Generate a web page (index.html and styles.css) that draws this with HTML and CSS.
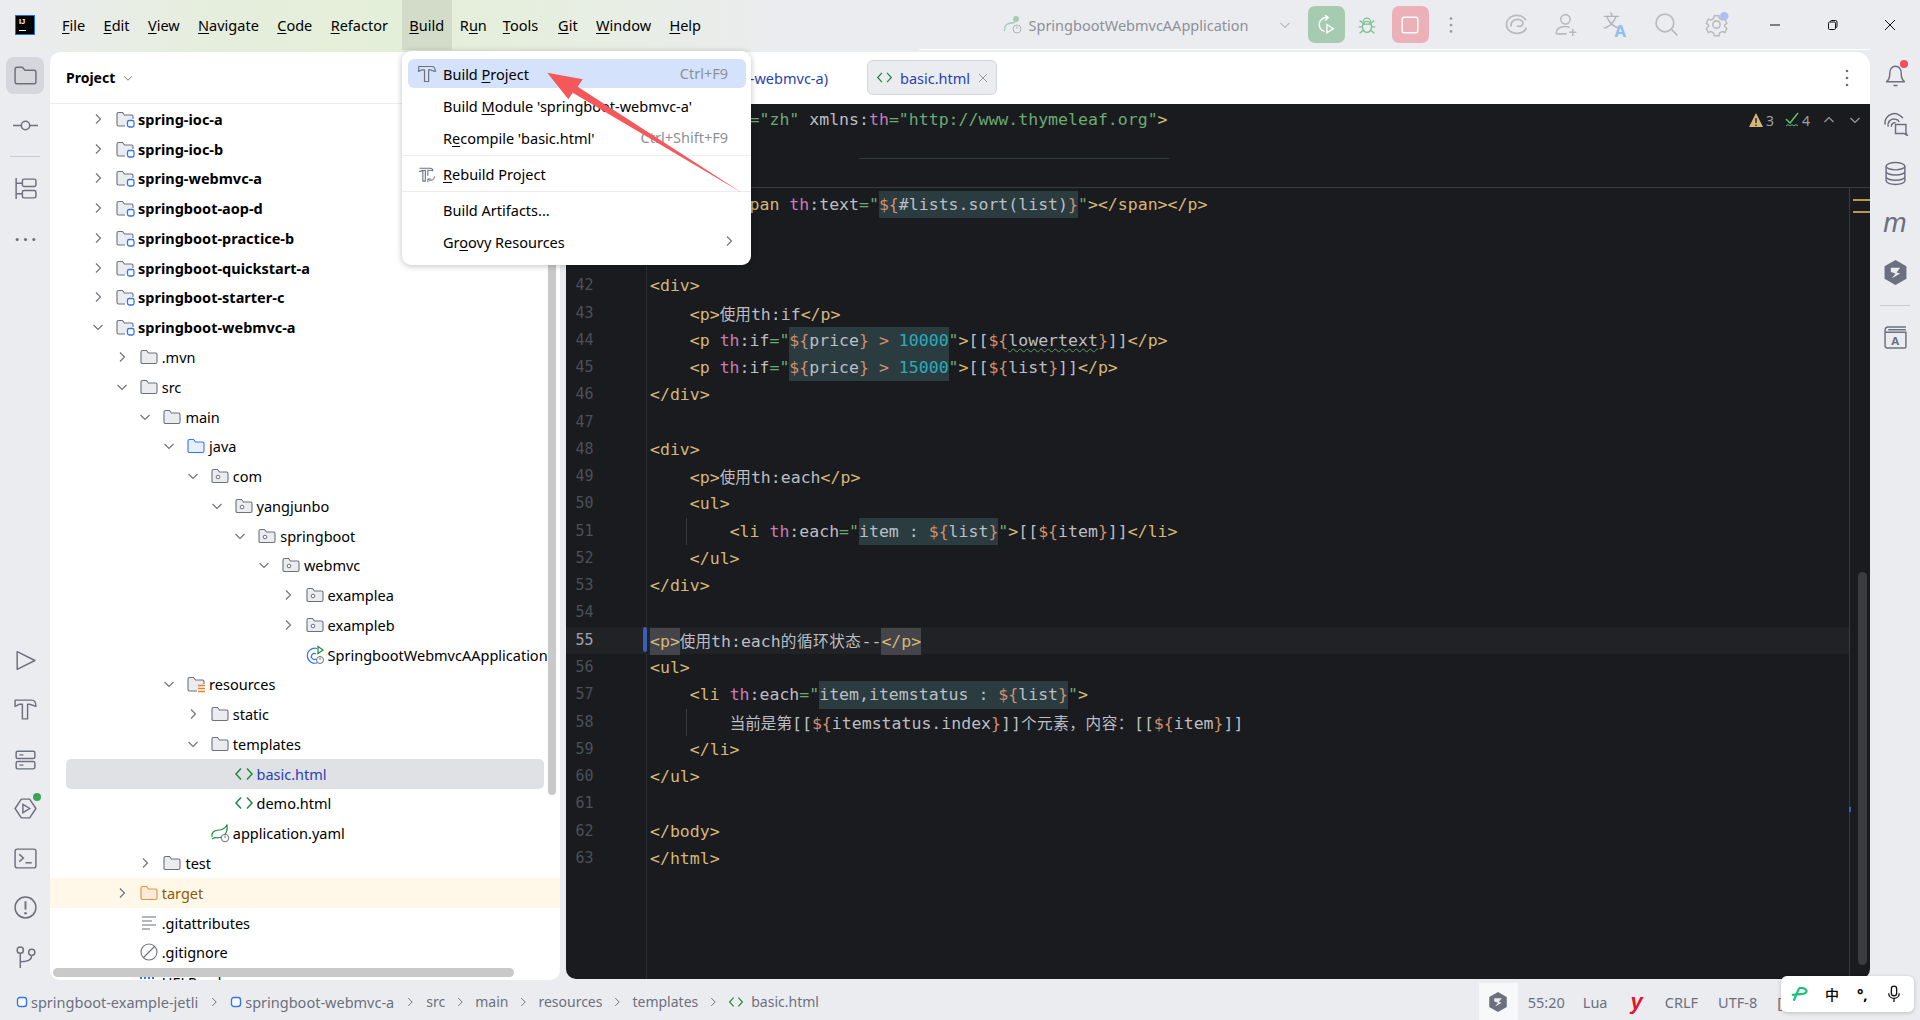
FILE: index.html
```html
<!DOCTYPE html>
<html lang="en">
<head>
<meta charset="utf-8">
<title>springboot-webmvc-a – basic.html</title>
<link rel="stylesheet" href="styles.css">
</head>
<body>
<svg class="defs" width="0" height="0" aria-hidden="true">
<defs>
<symbol id="r" viewBox="0 0 16 16"><path d="M6 3.500 10.500 8 6 12.500" fill="none" stroke="#6c707e" stroke-width="1.100"/></symbol>
<symbol id="d" viewBox="0 0 16 16"><path d="M3.500 6 8 10.500 12.500 6" fill="none" stroke="#6c707e" stroke-width="1.100"/></symbol>
<symbol id="folder" viewBox="0 0 20 20"><path d="M2 5a1.500 1.500 0 0 1 1.500-1.500h4l2 2.500h7a1.500 1.500 0 0 1 1.500 1.500v7.500a1.500 1.500 0 0 1-1.500 1.500h-13A1.500 1.500 0 0 1 2 15.500z" fill="#ebecf0" stroke="#6c707e" stroke-width="1.100"/></symbol>
<symbol id="pkg" viewBox="0 0 20 20"><path d="M2 5a1.500 1.500 0 0 1 1.500-1.500h4l2 2.500h7a1.500 1.500 0 0 1 1.500 1.500v7.500a1.500 1.500 0 0 1-1.500 1.500h-13A1.500 1.500 0 0 1 2 15.500z" fill="#ebecf0" stroke="#6c707e" stroke-width="1.100"/><circle cx="8" cy="11" r="1.800" fill="#fff" stroke="#6c707e"/></symbol>
<symbol id="mod" viewBox="0 0 20 20"><path d="M10 17H3.500A1.500 1.500 0 0 1 2 15.500V5a1.500 1.500 0 0 1 1.500-1.500h4l2 2.500h7a1.500 1.500 0 0 1 1.500 1.500V10" fill="#ebecf0" stroke="#6c707e" stroke-width="1.100"/><rect x="12.500" y="11.500" width="6.500" height="6.500" rx="1.800" fill="#fff" stroke="#3574f0" stroke-width="1.300"/></symbol>
<symbol id="java" viewBox="0 0 20 20"><path d="M2 5a1.500 1.500 0 0 1 1.500-1.500h4l2 2.500h7a1.500 1.500 0 0 1 1.500 1.500v7.500a1.500 1.500 0 0 1-1.500 1.500h-13A1.500 1.500 0 0 1 2 15.500z" fill="#e7effd" stroke="#3574f0" stroke-width="1.100"/></symbol>
<symbol id="res" viewBox="0 0 20 20"><path d="M11 17H3.500A1.500 1.500 0 0 1 2 15.500V5a1.500 1.500 0 0 1 1.500-1.500h4l2 2.500h7a1.500 1.500 0 0 1 1.500 1.500V10" fill="#ebecf0" stroke="#6c707e" stroke-width="1.100"/><path d="M12 11.500h7M12 14.500h7M12 17.500h7" stroke="#e8812c" stroke-width="1.500"/></symbol>
<symbol id="target" viewBox="0 0 20 20"><path d="M2 5a1.500 1.500 0 0 1 1.500-1.500h4l2 2.500h7a1.500 1.500 0 0 1 1.500 1.500v7.500a1.500 1.500 0 0 1-1.500 1.500h-13A1.500 1.500 0 0 1 2 15.500z" fill="#fdeadb" stroke="#e8963c" stroke-width="1.200"/></symbol>
<symbol id="html" viewBox="0 0 20 20"><path d="M7 4.500 2 10l5 5.500M13 4.500l5 5.500-5 5.500" fill="none" stroke="#208a3c" stroke-width="1.500"/></symbol>
<symbol id="boot" viewBox="0 0 20 20"><path d="M12 3.500a7.500 7.500 0 1 0 1 14" fill="none" stroke="#3574f0" stroke-width="1.200"/><path d="M11 9a3 3 0 1 0 0 5" fill="none" stroke="#3574f0" stroke-width="1.200"/><path d="M13 1.500 18 5l-5 3.500z" fill="#fff" stroke="#208a3c" stroke-width="1.200"/><circle cx="15" cy="15" r="3.500" fill="#fff" stroke="#6c707e"/><path d="M15 12.500v2.500" stroke="#6c707e"/></symbol>
<symbol id="yaml" viewBox="0 0 20 20"><path d="M2 14c-1-4 2-7 7-7 4 0 6-2 8-5 1 5-1 10-5 12-3 1-5 1-7 .5L2 16" fill="none" stroke="#208a3c" stroke-width="1.200"/><circle cx="15" cy="15" r="3.800" fill="#fff" stroke="#6c707e"/><path d="M15 12.500V15" stroke="#6c707e"/></symbol>
<symbol id="attr" viewBox="0 0 20 20"><path d="M3 4h14M3 8h10M3 12h14M3 16h8" stroke="#6c707e" stroke-width="1.100"/></symbol>
<symbol id="ignore" viewBox="0 0 20 20"><circle cx="10" cy="10" r="8" fill="none" stroke="#6c707e" stroke-width="1.100"/><path d="M4.500 15.500 15.500 4.500" stroke="#6c707e" stroke-width="1.100"/></symbol>
<symbol id="md" viewBox="0 0 20 20"><path d="M2 3v4M6 3v4M10 3v4M14 3v4" stroke="#3574f0" stroke-width="2"/></symbol>
<symbol id="hex" viewBox="0 0 24 24"><path d="M12 0 22.500 6v12L12 24 1.500 18V6z" fill="#6c707e"/><path d="M7.500 7.500h9l-3.500 4.500 3.500 1-8 4.500 3.500-4.500-4.500-1.500z" fill="#ebecf0"/></symbol>
<symbol id="hammer" viewBox="0 0 24 24"><path d="M2 3h16c3 0 4 3 4 6l-6-2h-2v14H9V7H6L2 9z" fill="none" stroke="#6c707e" stroke-width="1.400" stroke-linejoin="round"/></symbol>
</defs>
</svg>

<div class="app">
  <header class="titlebar">
    <div class="logo"><span>IJ</span><i></i></div>
    <nav class="menubar">
      <span class="mi"><u>F</u>ile</span><span class="mi"><u>E</u>dit</span><span class="mi"><u>V</u>iew</span><span class="mi"><u>N</u>avigate</span><span class="mi"><u>C</u>ode</span><span class="mi"><u>R</u>efactor</span><span class="mi mi-open"><u>B</u>uild</span><span class="mi mi-tight">R<u>u</u>n</span><span class="mi mi-wide"><u>T</u>ools</span><span class="mi"><u>G</u>it</span><span class="mi"><u>W</u>indow</span><span class="mi"><u>H</u>elp</span>
    </nav>
    <div class="runcfg">
      <svg class="ic20" viewBox="0 0 20 20"><circle cx="13" cy="4" r="3" fill="#a6cbb0"/><path d="M2 14c-1-3 2-6 7-6 2 0 3-1 4-2M2 14l-1 2" fill="none" stroke="#a6cbb0" stroke-width="1.300"/><circle cx="14" cy="14" r="4" fill="none" stroke="#b0b2b8"/><path d="M14 11.500V14" stroke="#b0b2b8"/></svg>
      <span class="runname">SpringbootWebmvcAApplication</span>
      <svg class="cfgchev" viewBox="0 0 16 16"><path d="M3.500 6 8 10.500 12.500 6" fill="none" stroke="#b8bac0" stroke-width="1.100"/></svg>
    </div>
    <div class="runbtns">
      <span class="tb tb-green"><svg viewBox="0 0 24 24"><path d="M14 4a7.500 7.500 0 1 0 -3.500 15" fill="none" stroke="#fff" stroke-width="1.500"/><path d="M11 1.500 14.500 4 11 7" fill="none" stroke="#fff" stroke-width="1.500"/><path d="M13 11.500 20 16l-7 4.500z" fill="none" stroke="#fff" stroke-width="1.500"/></svg></span>
      <span class="tb tb-bug"><svg viewBox="0 0 24 24"><ellipse cx="12" cy="14" rx="5" ry="6" fill="none" stroke="#7fbf8e" stroke-width="1.500"/><path d="M8 8.500a4 4 0 0 1 8 0M4 7l3.500 3M20 7l-3.500 3M3 14h4M21 14h-4M4 21l3.500-3M20 21l-3.500-3M7.500 11h9" fill="none" stroke="#7fbf8e" stroke-width="1.500"/></svg></span>
      <span class="tb tb-red"><svg viewBox="0 0 24 24"><rect x="3.500" y="3.500" width="17" height="17" rx="2" fill="none" stroke="#fff" stroke-width="1.500"/></svg></span>
      <span class="tb tb-dots"><svg viewBox="0 0 24 24"><circle cx="12" cy="5" r="1.500" fill="#9a9ca3"/><circle cx="12" cy="12" r="1.500" fill="#9a9ca3"/><circle cx="12" cy="19" r="1.500" fill="#9a9ca3"/></svg></span>
    </div>
    <div class="tools">
      <span class="tb"><svg viewBox="0 0 24 24"><path d="M21 8C19 4 14 2.500 9.500 3.500 4.500 5 2 9 2.500 13c.7 5 5.500 8 11 7.500 4-.4 7-2.500 8-5.500M7 14c-1-3.500 1.500-7 6-7 3.500 0 5.500 2 5 4.500-.5 2.500-4 3-5.500 1.500" fill="none" stroke="#b8bac0" stroke-width="1.700"/></svg></span>
      <span class="tb"><svg viewBox="0 0 24 24"><circle cx="11" cy="7" r="4.500" fill="none" stroke="#b8bac0" stroke-width="1.500"/><path d="M2 21c0-4 3-7 9-7 1.500 0 3 .3 4 1M2 21h10M18 16v7M14.500 19.500h7" fill="none" stroke="#b8bac0" stroke-width="1.500"/></svg></span>
      <span class="tb"><svg viewBox="0 0 24 24"><text x="-1" y="14" class="tr-zh">文</text><text x="10" y="24" class="tr-a">A</text></svg></span>
      <span class="tb"><svg viewBox="0 0 24 24"><circle cx="10.500" cy="10.500" r="8.500" fill="none" stroke="#b8bac0" stroke-width="1.600"/><path d="m16.500 16.500 6 6" stroke="#b8bac0" stroke-width="1.600"/></svg></span>
      <span class="tb"><svg viewBox="0 0 24 24"><path d="M9.500 2.500h5l.7 3 2.700 1.500 3-.9 2 4.400-2.300 2 0 1.500 2.300 2-2 4.400-3-.9-2.700 1.500-.7 3h-5l-.7-3-2.700-1.500-3 .9-2-4.400 2.300-2v-1.500l-2.300-2 2-4.400 3 .9 2.700-1.500z" transform="translate(1.300 1.300) scale(.9)" fill="none" stroke="#b8bac0" stroke-width="1.600"/><circle cx="12" cy="12" r="3.500" fill="none" stroke="#b8bac0" stroke-width="1.500"/><circle cx="19.500" cy="4" r="4" fill="#a9c0f0"/></svg></span>
    </div>
    <div class="winctl">
      <span class="wc"><svg viewBox="0 0 12 12"><path d="M1 6h10" stroke="#111" stroke-width="1"/></svg></span>
      <span class="wc"><svg viewBox="0 0 12 12"><rect x="1.500" y="3" width="7" height="7.500" rx="1.200" fill="none" stroke="#111"/><path d="M3.500 3V2.500A1 1 0 0 1 4.500 1.500h4a1.500 1.500 0 0 1 1.500 1.500v4.500a1 1 0 0 1-1 1" fill="none" stroke="#111"/></svg></span>
      <span class="wc"><svg viewBox="0 0 12 12"><path d="m1 1 10 10M11 1 1 11" stroke="#111" stroke-width="1"/></svg></span>
    </div>
  </header>

  <main class="workspace">
    <aside class="rail">
      <div class="railgroup">
        <span class="rb rb-on"><svg viewBox="0 0 24 24"><path d="M2 6a2 2 0 0 1 2-2h5l2.500 3H20a2 2 0 0 1 2 2v9a2 2 0 0 1-2 2H4a2 2 0 0 1-2-2z" fill="none" stroke="#6c707e" stroke-width="1.400"/></svg></span>
        <span class="rb"><svg viewBox="0 0 24 24"><circle cx="12" cy="12" r="4" fill="none" stroke="#6c707e" stroke-width="1.400"/><path d="M0 12h8M16 12h8" stroke="#6c707e" stroke-width="1.400"/></svg></span>
        <i class="railsep"></i>
        <span class="rb"><svg viewBox="0 0 24 24"><path d="M3 2v20M3 7h6M3 17h6" fill="none" stroke="#6c707e" stroke-width="1.400"/><rect x="9" y="3" width="13" height="7" rx="1.500" fill="none" stroke="#6c707e" stroke-width="1.400"/><rect x="9" y="14" width="13" height="7" rx="1.500" fill="none" stroke="#6c707e" stroke-width="1.400"/></svg></span>
        <span class="rb rb-dots"><svg viewBox="0 0 24 24"><circle cx="4" cy="12" r="1.500" fill="#6c707e"/><circle cx="12" cy="12" r="1.500" fill="#6c707e"/><circle cx="20" cy="12" r="1.500" fill="#6c707e"/></svg></span>
      </div>
      <div class="railgroup">
        <span class="rb"><svg viewBox="0 0 24 24"><path d="M4 3.500 21 12 4 20.500z" fill="none" stroke="#6c707e" stroke-width="1.400" stroke-linejoin="round"/></svg></span>
        <span class="rb"><svg><use href="#hammer"/></svg></span>
        <span class="rb"><svg viewBox="0 0 24 24"><rect x="3" y="4" width="18" height="7" rx="1.500" fill="none" stroke="#6c707e" stroke-width="1.400"/><rect x="3" y="14" width="18" height="7" rx="1.500" fill="none" stroke="#6c707e" stroke-width="1.400"/><path d="M6 7.500h4M6 17.500h4" stroke="#6c707e" stroke-width="1.200"/></svg></span>
        <span class="rb rb-dot"><svg viewBox="0 0 24 24"><path d="M8 3h8l6 9-6 9H8l-6-9z" fill="none" stroke="#6c707e" stroke-width="1.400" stroke-linejoin="round"/><path d="M9.500 8 16 12l-6.500 4z" fill="none" stroke="#6c707e" stroke-width="1.400"/></svg></span>
        <span class="rb"><svg viewBox="0 0 24 24"><rect x="2" y="3" width="20" height="18" rx="2" fill="none" stroke="#6c707e" stroke-width="1.400"/><path d="m6 8 4 3.500L6 15M12 16h6" fill="none" stroke="#6c707e" stroke-width="1.400"/></svg></span>
        <span class="rb"><svg viewBox="0 0 24 24"><circle cx="12" cy="12" r="10" fill="none" stroke="#6c707e" stroke-width="1.400"/><path d="M12 6v8" stroke="#6c707e" stroke-width="1.800"/><circle cx="12" cy="17.500" r="1.200" fill="#6c707e"/></svg></span>
        <span class="rb"><svg viewBox="0 0 24 24"><circle cx="7" cy="5" r="3" fill="none" stroke="#6c707e" stroke-width="1.400"/><circle cx="18" cy="7" r="3" fill="none" stroke="#6c707e" stroke-width="1.400"/><path d="M7 8v14M7 16c6 0 11-1 11-6" fill="none" stroke="#6c707e" stroke-width="1.400"/></svg></span>
      </div>
    </aside>

    <section class="project">
      <div class="phead"><b>Project</b><svg class="pchev" viewBox="0 0 16 16"><path d="M3.500 6 8 10.500 12.500 6" fill="none" stroke="#6c707e" stroke-width="1.100"/></svg></div>
      <div class="tree">
        <div class="row d0 bold"><svg class="tw"><use href="#r"/></svg><svg class="fi"><use href="#mod"/></svg>spring-ioc-a</div>
        <div class="row d0 bold"><svg class="tw"><use href="#r"/></svg><svg class="fi"><use href="#mod"/></svg>spring-ioc-b</div>
        <div class="row d0 bold"><svg class="tw"><use href="#r"/></svg><svg class="fi"><use href="#mod"/></svg>spring-webmvc-a</div>
        <div class="row d0 bold"><svg class="tw"><use href="#r"/></svg><svg class="fi"><use href="#mod"/></svg>springboot-aop-d</div>
        <div class="row d0 bold"><svg class="tw"><use href="#r"/></svg><svg class="fi"><use href="#mod"/></svg>springboot-practice-b</div>
        <div class="row d0 bold"><svg class="tw"><use href="#r"/></svg><svg class="fi"><use href="#mod"/></svg>springboot-quickstart-a</div>
        <div class="row d0 bold"><svg class="tw"><use href="#r"/></svg><svg class="fi"><use href="#mod"/></svg>springboot-starter-c</div>
        <div class="row d0 bold"><svg class="tw"><use href="#d"/></svg><svg class="fi"><use href="#mod"/></svg>springboot-webmvc-a</div>
        <div class="row d1"><svg class="tw"><use href="#r"/></svg><svg class="fi"><use href="#folder"/></svg>.mvn</div>
        <div class="row d1"><svg class="tw"><use href="#d"/></svg><svg class="fi"><use href="#folder"/></svg>src</div>
        <div class="row d2"><svg class="tw"><use href="#d"/></svg><svg class="fi"><use href="#folder"/></svg>main</div>
        <div class="row d3"><svg class="tw"><use href="#d"/></svg><svg class="fi"><use href="#java"/></svg>java</div>
        <div class="row d4"><svg class="tw"><use href="#d"/></svg><svg class="fi"><use href="#pkg"/></svg>com</div>
        <div class="row d5"><svg class="tw"><use href="#d"/></svg><svg class="fi"><use href="#pkg"/></svg>yangjunbo</div>
        <div class="row d6"><svg class="tw"><use href="#d"/></svg><svg class="fi"><use href="#pkg"/></svg>springboot</div>
        <div class="row d7"><svg class="tw"><use href="#d"/></svg><svg class="fi"><use href="#pkg"/></svg>webmvc</div>
        <div class="row d8"><svg class="tw"><use href="#r"/></svg><svg class="fi"><use href="#pkg"/></svg>examplea</div>
        <div class="row d8"><svg class="tw"><use href="#r"/></svg><svg class="fi"><use href="#pkg"/></svg>exampleb</div>
        <div class="row d8"><span class="tw"></span><svg class="fi"><use href="#boot"/></svg>SpringbootWebmvcAApplication</div>
        <div class="row d3"><svg class="tw"><use href="#d"/></svg><svg class="fi"><use href="#res"/></svg>resources</div>
        <div class="row d4"><svg class="tw"><use href="#r"/></svg><svg class="fi"><use href="#folder"/></svg>static</div>
        <div class="row d4"><svg class="tw"><use href="#d"/></svg><svg class="fi"><use href="#folder"/></svg>templates</div>
        <div class="row d5 sel"><span class="tw"></span><svg class="fi"><use href="#html"/></svg><span class="bluetxt">basic.html</span></div>
        <div class="row d5"><span class="tw"></span><svg class="fi"><use href="#html"/></svg>demo.html</div>
        <div class="row d4"><span class="tw"></span><svg class="fi"><use href="#yaml"/></svg>application.yaml</div>
        <div class="row d2"><svg class="tw"><use href="#r"/></svg><svg class="fi"><use href="#folder"/></svg>test</div>
        <div class="row d1 excl"><svg class="tw"><use href="#r"/></svg><svg class="fi"><use href="#target"/></svg>target</div>
        <div class="row d1"><span class="tw"></span><svg class="fi"><use href="#attr"/></svg>.gitattributes</div>
        <div class="row d1"><span class="tw"></span><svg class="fi"><use href="#ignore"/></svg>.gitignore</div>
        <div class="row d1"><span class="tw"></span><svg class="fi"><use href="#md"/></svg>HELP.md</div>
      </div>
      <i class="sb-v"></i>
      <i class="sb-h"></i>
    </section>

    <section class="editor">
      <div class="tabs">
        <span class="tab-prev">(springboot-webmvc-a)</span>
        <span class="tab-on"><svg class="tabic"><use href="#html"/></svg><span class="tabname">basic.html</span><svg class="tabx" viewBox="0 0 10 10"><path d="m1 1 8 8M9 1 1 9" stroke="#9a9ca3"/></svg></span>
        <svg class="tabmore" viewBox="0 0 4 20"><circle cx="2" cy="3" r="1.300" fill="#6c707e"/><circle cx="2" cy="10" r="1.300" fill="#6c707e"/><circle cx="2" cy="17" r="1.300" fill="#6c707e"/></svg>
      </div>
      <div class="code">
        <div class="sticky">
          <div class="ln"><span class="num"></span><span class="c"><span class="t">&lt;html</span> <span class="a">lang</span><span class="g">=</span><span class="s">"zh"</span> <span class="a">xmlns:<span class="p">th</span></span><span class="g">=</span><span class="s">"http://www.thymeleaf.org"</span><span class="t">&gt;</span></span></div>
          <i class="stickyrule"></i>
          <div class="widget"><svg class="wi" viewBox="0 0 16 16"><path d="M8 1 15 15H1z" fill="#d5b778"/><path d="M8 6v5M8 12.500v1.500" stroke="#1a1b1e" stroke-width="1.300"/></svg><span>3</span><svg class="wi wi2" viewBox="0 0 16 16"><path d="m2 7 4 4 8-10" fill="none" stroke="#5fb865" stroke-width="1.600"/><path d="m2 14 2-1.500 2 1.500 2-1.500 2 1.500 2-1.500 2 1.500" fill="none" stroke="#5fb865"/></svg><span>4</span><svg class="wa" viewBox="0 0 12 12"><path d="m1.500 8 4.500-4.500L10.500 8" fill="none" stroke="#9da0a8" stroke-width="1.100"/></svg><svg class="wa wa2" viewBox="0 0 12 12"><path d="m1.500 4 4.500 4.500L10.500 4" fill="none" stroke="#9da0a8" stroke-width="1.100"/></svg></div>
        </div>
        <div class="codebody">
          <div class="lines">
            <div class="ln"><span class="num">39</span><span class="c">        <span class="t">&lt;span</span> <span class="p">th</span><span class="a">:text</span><span class="g">=</span><span class="s">"</span><span class="hl"><span class="e">${</span>#lists.sort(list)<span class="e">}</span></span><span class="s">"</span><span class="t">&gt;&lt;/span&gt;&lt;/p&gt;</span></span></div>
            <div class="ln"><span class="num">40</span><span class="c"></span></div>
            <div class="ln"><span class="num">41</span><span class="c"></span></div>
            <div class="ln"><span class="num">42</span><span class="c"><span class="t">&lt;div&gt;</span></span></div>
            <div class="ln"><span class="num">43</span><span class="c">    <span class="t">&lt;p&gt;</span><span class="zh">使用</span>th:if<span class="t">&lt;/p&gt;</span></span></div>
            <div class="ln"><span class="num">44</span><span class="c">    <span class="t">&lt;p</span> <span class="p">th</span><span class="a">:if</span><span class="g">=</span><span class="s">"</span><span class="hl"><span class="e">${</span>price<span class="e">}</span> <span class="e">&gt;</span> <span class="n">10000</span></span><span class="s">"</span><span class="t">&gt;</span>[[<span class="e">${</span><span class="wavy">lowertext</span><span class="e">}</span>]]<span class="t">&lt;/p&gt;</span></span></div>
            <div class="ln"><span class="num">45</span><span class="c">    <span class="t">&lt;p</span> <span class="p">th</span><span class="a">:if</span><span class="g">=</span><span class="s">"</span><span class="hl"><span class="e">${</span>price<span class="e">}</span> <span class="e">&gt;</span> <span class="n">15000</span></span><span class="s">"</span><span class="t">&gt;</span>[[<span class="e">${</span>list<span class="e">}</span>]]<span class="t">&lt;/p&gt;</span></span></div>
            <div class="ln"><span class="num">46</span><span class="c"><span class="t">&lt;/div&gt;</span></span></div>
            <div class="ln"><span class="num">47</span><span class="c"></span></div>
            <div class="ln"><span class="num">48</span><span class="c"><span class="t">&lt;div&gt;</span></span></div>
            <div class="ln"><span class="num">49</span><span class="c">    <span class="t">&lt;p&gt;</span><span class="zh">使用</span>th:each<span class="t">&lt;/p&gt;</span></span></div>
            <div class="ln"><span class="num">50</span><span class="c">    <span class="t">&lt;ul&gt;</span></span></div>
            <div class="ln guide"><span class="num">51</span><span class="c">        <span class="t">&lt;li</span> <span class="p">th</span><span class="a">:each</span><span class="g">=</span><span class="s">"</span><span class="hl">item : <span class="e">${</span>list<span class="e">}</span></span><span class="s">"</span><span class="t">&gt;</span>[[<span class="e">${</span>item<span class="e">}</span>]]<span class="t">&lt;/li&gt;</span></span></div>
            <div class="ln"><span class="num">52</span><span class="c">    <span class="t">&lt;/ul&gt;</span></span></div>
            <div class="ln"><span class="num">53</span><span class="c"><span class="t">&lt;/div&gt;</span></span></div>
            <div class="ln"><span class="num">54</span><span class="c"></span></div>
            <div class="ln cur"><span class="num">55</span><span class="c"><span class="t mt">&lt;p&gt;</span><span class="zh">使用</span>th:each<span class="zh zh-w">的循环状态</span>--<span class="t mt">&lt;/p&gt;</span></span></div>
            <div class="ln"><span class="num">56</span><span class="c"><span class="t">&lt;ul&gt;</span></span></div>
            <div class="ln"><span class="num">57</span><span class="c">    <span class="t">&lt;li</span> <span class="p">th</span><span class="a">:each</span><span class="g">=</span><span class="s">"</span><span class="hl">item,itemstatus : <span class="e">${</span>list<span class="e">}</span></span><span class="s">"</span><span class="t">&gt;</span></span></div>
            <div class="ln guide"><span class="num">58</span><span class="c">        <span class="zh">当前是第</span>[[<span class="e">${</span>itemstatus.index<span class="e">}</span>]]<span class="zh zh-w">个元素，内容：</span>[[<span class="e">${</span>item<span class="e">}</span>]]</span></div>
            <div class="ln"><span class="num">59</span><span class="c">    <span class="t">&lt;/li&gt;</span></span></div>
            <div class="ln"><span class="num">60</span><span class="c"><span class="t">&lt;/ul&gt;</span></span></div>
            <div class="ln"><span class="num">61</span><span class="c"></span></div>
            <div class="ln"><span class="num">62</span><span class="c"><span class="t">&lt;/body&gt;</span></span></div>
            <div class="ln"><span class="num">63</span><span class="c"><span class="t">&lt;/html&gt;</span></span></div>
          </div>
          <div class="strip"><i class="mark mark1"></i><i class="mark mark2"></i><i class="tick"></i><i class="sb-e"></i></div>
        </div>
      </div>
    </section>

    <aside class="rail rail-r">
      <span class="rb rb-bell"><svg viewBox="0 0 24 24"><path d="M3 19c2-1 3.500-3 3.500-8 0-4 2-7 5.500-7s5.500 3 5.500 7c0 5 1.500 7 3.500 8zM10 22.500h4" fill="none" stroke="#6c707e" stroke-width="1.400"/></svg></span>
      <span class="rb"><svg viewBox="0 0 24 24"><path d="M2 13C1 5 9 1 14 3c2 1 4 2 5 4M5 15c-1-5 3-8 7-7 1.500 .3 3 1 3.500 2.500M8 15c0-3 2-4 4-3.500" fill="none" stroke="#6c707e" stroke-width="1.400"/><path d="M12 13h10v8l1.500 2.500-3.500-2H12z" fill="#ebecf0" stroke="#6c707e" stroke-width="1.400"/></svg></span>
      <span class="rb"><svg viewBox="0 0 24 24"><ellipse cx="12" cy="5" rx="9" ry="3.500" fill="none" stroke="#6c707e" stroke-width="1.400"/><path d="M3 5v14c0 2 4 3.500 9 3.500s9-1.500 9-3.500V5M3 10c0 2 4 3.500 9 3.500s9-1.500 9-3.500M3 15c0 2 4 3.500 9 3.500s9-1.500 9-3.500" fill="none" stroke="#6c707e" stroke-width="1.400"/></svg></span>
      <span class="rb rb-m">m</span>
      <span class="rb"><svg><use href="#hex"/></svg></span>
      <i class="railsep railsep-r"></i>
      <span class="rb"><svg viewBox="0 0 24 24"><path d="M2 7V5a3 3 0 0 1 3-3h17M2 7v13a2 2 0 0 0 2 2h17a1 1 0 0 0 1-1V7H2zM5 4.500h17" fill="none" stroke="#6c707e" stroke-width="1.400"/><text x="8" y="19" class="book-a">A</text></svg></span>
    </aside>
  </main>

  <footer class="status">
    <div class="crumbs">
      <svg class="modi" viewBox="0 0 12 12"><rect x="1.500" y="1.500" width="9" height="9" rx="2.500" fill="#fff" stroke="#3574f0" stroke-width="1.400"/></svg><span>springboot-example-jetli</span><svg class="cc"><use href="#r"/></svg>
      <svg class="modi" viewBox="0 0 12 12"><rect x="1.500" y="1.500" width="9" height="9" rx="2.500" fill="#fff" stroke="#3574f0" stroke-width="1.400"/></svg><span>springboot-webmvc-a</span><svg class="cc"><use href="#r"/></svg>
      <span class="crs">src</span><svg class="cc cc2"><use href="#r"/></svg>
      <span class="crs">main</span><svg class="cc cc2"><use href="#r"/></svg>
      <span class="crs">resources</span><svg class="cc cc2"><use href="#r"/></svg>
      <span class="crs">templates</span><svg class="cc cc2"><use href="#r"/></svg>
      <svg class="htmli"><use href="#html"/></svg><span class="crs">basic.html</span>
    </div>
    <div class="stright">
      <span class="st-hex"><svg><use href="#hex"/></svg></span>
      <span class="st-pos">55:20</span>
      <span class="st-lua">Lua</span>
      <span class="st-y">y</span>
      <span class="st-crlf">CRLF</span>
      <span class="st-utf">UTF-8</span>
      <span class="st-lock">[</span>
    </div>
  </footer>

  <div class="popup">
    <div class="pi pi-on"><svg class="pico"><use href="#hammer"/></svg><span>Build <u>P</u>roject</span><em>Ctrl+F9</em></div>
    <div class="pi"><span class="pnoic"></span><span>Build <u>M</u>odule 'springboot-webmvc-a'</span></div>
    <div class="pi"><span class="pnoic"></span><span>R<u>e</u>compile 'basic.html'</span><em>Ctrl+Shift+F9</em></div>
    <i class="psep"></i>
    <div class="pi"><svg class="pico" viewBox="0 0 24 24"><path d="M3 5h13c2 0 3 2 3 3l-4-.5h-2V14M10 7.500v13H7v-13L3 9z" fill="none" stroke="#6c707e" stroke-width="1.300" stroke-linejoin="round"/><path d="M21 15a4.500 4.500 0 0 1-8 3M13 22v-4h4" fill="none" stroke="#6c707e" stroke-width="1.200"/></svg><span><u>R</u>ebuild Project</span></div>
    <i class="psep"></i>
    <div class="pi"><span class="pnoic"></span><span>Build Artifacts...</span></div>
    <div class="pi"><span class="pnoic"></span><span>Gr<u>o</u>ovy Resources</span><svg class="psub"><use href="#r"/></svg></div>
  </div>

  <svg class="arrow" viewBox="0 0 1920 1020" aria-hidden="true"><polygon points="547.300,72.700 582.700,79.300 577.700,86.700 742.700,193.300 572.700,92.700 568.300,99.300" fill="#f4585a"/></svg>

  <div class="ime">
    <svg class="ime-p" viewBox="0 0 20 16"><path d="M3 15 9 1M1 8.500c4-1 8-1 10-1 4 0 7-1.500 6-4S11 0 9 1" fill="none" stroke="#1dbf7c" stroke-width="2.400"/></svg>
    <span class="ime-zh">中</span>
    <span class="ime-dot">°,</span>
    <svg class="ime-mic" viewBox="0 0 16 20"><rect x="5" y="1" width="6" height="11" rx="3" fill="none" stroke="#111" stroke-width="1.500"/><path d="M2 9c0 3.500 2.500 6 6 6s6-2.500 6-6M8 15v4" fill="none" stroke="#111" stroke-width="1.500"/></svg>
  </div>
</div>
</body>
</html>
```

FILE: styles.css
```css
* { box-sizing: border-box; }
html, body { margin: 0; padding: 0; height: 100%; overflow: hidden; }
body { font-family: "Noto Sans", "Noto Sans CJK SC", sans-serif; font-size: 14px; color: #000; background: #ebecf0; }
.defs { position: absolute; }
i { display: block; font-style: normal; }
u { text-underline-offset: 2px; text-decoration-thickness: 1px; }

.app { position: relative; width: 1920px; height: 1020px; display: flex; flex-direction: column; overflow: hidden; }

/* title bar */
.titlebar { position: relative; flex: 0 0 52px; display: flex; align-items: flex-start; background: linear-gradient(90deg, #ebecf0 0, #e5eedc 220px, #e4efd8 430px, #ebecf0 800px); }
.titlebar::after { content: ""; position: absolute; left: 919px; right: 50px; top: 49px; height: 1px; background: #fff; }
.logo { margin: 15px 0 0 15px; width: 20px; height: 20px; background: #000; border: 1px solid #1f6fe0; position: relative; color: #fff; font: 700 7.5px/9px "Liberation Sans", sans-serif; padding: 1px 0 0 3px; }
.logo i { position: absolute; left: 3px; bottom: 3px; width: 7px; height: 1px; background: #fff; }
.menubar { display: flex; margin-left: 19px; height: 50px; align-items: center; }
.mi { padding: 0 8px; margin-right: 2.4px; height: 50px; line-height: 50px; white-space: nowrap; font-size: 14.5px; }
.mi-open { background: #d3dcc9; margin: 0 0 0 3.5px; padding: 0 0 0 7.5px; width: 50px; }
.mi-tight { margin-right: 0; }
.mi-wide { margin-right: 4px; }
.runcfg { margin-left: auto; display: flex; align-items: center; height: 50px; color: #8d9098; font-size: 14.5px; }
.ic20 { width: 20px; height: 20px; margin-right: 6px; }
.runname { width: 248px; white-space: nowrap; }
.cfgchev { width: 16px; height: 16px; margin-right: 15px; }
.runbtns { display: flex; margin-top: 6px; }
.tb { width: 37px; height: 37px; display: flex; align-items: center; justify-content: center; border-radius: 7px; flex: none; }
.tb svg { width: 22px; height: 22px; }
.tb-green { background: #a6cbb0; }
.tb-bug { margin-left: 4px; }
.tb-red { background: #ebb0b8; margin-left: 6px; }
.tb-dots { margin-left: 4px; }
.tools { display: flex; margin: 6px 0 0 28px; gap: 13px; }
.tools .tb svg { width: 25px; height: 25px; overflow: visible; }
.tr-zh { font: 16px "Noto Sans CJK SC", sans-serif; fill: #b0b2b8; }
.tr-a { font: 700 16px "Noto Sans", sans-serif; fill: #8fc0ee; }
.winctl { display: flex; margin: 6px 1px 0 12px; }
.wc { width: 57.5px; height: 37px; display: flex; align-items: center; justify-content: center; }
.wc svg { width: 12px; height: 12px; }

/* workspace */
.workspace { flex: 0 0 928px; display: flex; }
.rail { flex: 0 0 50px; display: flex; flex-direction: column; justify-content: space-between; align-items: center; padding: 5px 0 4.5px; }
.railgroup { display: flex; flex-direction: column; align-items: center; gap: 12.5px; }
.rb { position: relative; width: 38px; height: 37px; display: flex; align-items: center; justify-content: center; border-radius: 8px; flex: none; }
.rb svg { width: 25px; height: 25px; }
.rb-on { background: #d5d7dc; }
.rb-dots { margin-top: 2px; }
.rb-dot::after { content: ""; position: absolute; right: 3px; top: 3px; width: 8px; height: 8px; border-radius: 50%; background: #3aa655; }
.railsep { width: 30px; height: 1px; background: #c9ccd6; }
.rail-r { justify-content: flex-start; gap: 12.5px; padding: 3.5px 0 0; }
.railsep-r { margin: 2px 0 0; }
.rb-bell::after { content: ""; position: absolute; right: 6px; top: 4px; width: 8px; height: 8px; border-radius: 50%; background: #ef4f5a; }
.rb-m { font: italic 400 28px/37px "Liberation Sans", sans-serif; color: #6c707e; }
.book-a { font: 700 11px "Noto Sans", sans-serif; fill: #6c707e; }

/* project */
.project { position: relative; flex: 0 0 510px; margin-right: 6px; background: #fff; border-radius: 10px; overflow: hidden; }
.phead { height: 52px; border-bottom: 1px solid #ebecf0; display: flex; align-items: center; padding-left: 16px; font-size: 14px; }
.pchev { width: 14px; height: 14px; margin-left: 6px; }
.tree { isolation: isolate; height: 876px; overflow: hidden; }
.row { position: relative; height: 29.77px; display: flex; align-items: center; white-space: nowrap; font-size: 14.5px; }
.bold { font-weight: 700; }
.d0 { padding-left: 40px; } .d1 { padding-left: 63.7px; } .d2 { padding-left: 87.4px; }
.d3 { padding-left: 111.1px; } .d4 { padding-left: 134.8px; } .d5 { padding-left: 158.5px; }
.d6 { padding-left: 182.2px; } .d7 { padding-left: 205.9px; } .d8 { padding-left: 229.6px; }
.tw { flex: none; width: 16px; height: 16px; margin-right: 10px; }
.fi { flex: none; width: 20px; height: 20px; margin-right: 3px; margin-left: -1px; }
.sel::before { content: ""; position: absolute; z-index: -1; top: 0; bottom: 0; left: 16px; right: 16px; background: #dfe1e5; border-radius: 5px; }
.bluetxt { color: #2a3fb0; }
.excl { background: #fff7e8; color: #8f5a00; }
.sb-v { position: absolute; left: 498px; top: 52px; width: 8px; height: 691px; background: #c9c9c9; border-radius: 4px; }
.sb-h { position: absolute; left: 3px; top: 916px; width: 461px; height: 9px; background: #c9c9c9; border-radius: 4.5px; }

/* editor */
.editor { flex: 0 0 1304px; display: flex; flex-direction: column; height: 927px; }
.tabs { flex: 0 0 52px; background: #fff; border-radius: 10px 14px 0 0; display: flex; align-items: flex-start; color: #2a3fb0; font-size: 14.5px; position: relative; }
.tab-prev { width: 262px; overflow: hidden; white-space: nowrap; display: flex; justify-content: flex-end; margin-top: 15px; line-height: 22px; }
.tab-on { margin: 8px 0 0 39px; width: 130px; height: 35px; background: #ebecf0; border: 1px solid #d3d5db; border-radius: 6px; display: flex; align-items: center; padding-left: 8px; }
.tabic { width: 17px; height: 17px; }
.tabname { margin-left: 7px; }
.tabx { width: 10px; height: 10px; margin-left: 8px; }
.tabmore { position: absolute; right: 21px; top: 16px; width: 4px; height: 20px; }
.code { flex: 1; min-height: 0; display: flex; flex-direction: column; background: #1a1b1e; border-radius: 0 0 10px 10px; overflow: hidden; font: 16.55px/27.28px "DejaVu Sans Mono", "Noto Sans CJK SC", monospace; color: #bcbec4; }
.sticky { position: relative; flex: 0 0 84px; border-bottom: 1px solid #393b40; padding-top: 1.5px; }
.stickyrule { position: absolute; left: 293px; top: 54px; width: 310px; height: 1px; background: #2a3c40; }
.widget { position: absolute; right: 0; top: 0; width: 130px; height: 32px; display: flex; align-items: center; font: 14px "Noto Sans", sans-serif; color: #9da0a8; }
.wi { width: 16px; height: 16px; margin-left: 8px; }
.wi2 { margin-left: 10px; }
.widget span { margin-left: 2px; }
.wa { width: 12px; height: 12px; margin-left: 13px; }
.wa2 { margin-left: 14px; }
.codebody { flex: 1; min-height: 0; display: flex; position: relative; padding-top: 2.5px; }
.codebody::before { content: ""; position: absolute; left: 80px; top: 0; bottom: 0; width: 1px; background: #2b2d30; }
.lines { flex: 1; min-width: 0; position: relative; }
.strip { flex: 0 0 21px; position: relative; border-left: 1px solid #393b40; margin-top: -2.5px; }
.mark { position: absolute; left: 3px; width: 17px; height: 2px; background: #b79a4d; }
.mark1 { top: 11px; }
.mark2 { top: 23px; }
.tick { position: absolute; left: -1px; top: 619px; width: 2px; height: 5px; background: #3a5fb8; }
.sb-e { position: absolute; left: 8px; top: 384px; width: 9px; height: 393px; background: #3a3c40; border-radius: 4.5px; }
.ln { position: relative; display: flex; height: 27.28px; white-space: pre; }
.num { flex: 0 0 84px; padding-left: 9.5px; color: #4b5059; font-size: 15px; }
.cur { background: #202226; }
.cur .num { color: #a1a3ab; }
.cur::before { content: ""; position: absolute; left: 77px; top: 0; width: 4px; height: 25px; background: #3a5fb8; border-radius: 2px; }
.guide::after { content: ""; position: absolute; left: 120px; top: 0; bottom: 0; width: 1px; background: #393b40; }
.t { color: #d5b778; }
.a { color: #bcbec4; }
.p { color: #c77dbb; }
.g, .s { color: #6aab73; }
.e { color: #cf8e6d; }
.n { color: #2aacb8; }
.hl { background: #2a3c40; display: inline-block; height: 27.28px; }
.mt { background: #43454a; display: inline-block; height: 27.28px; }
.zh { font-family: "Noto Sans CJK SC", sans-serif; font-size: 15.6px; }
.zh-w { letter-spacing: .55px; }
.wavy { text-decoration: underline wavy #5a9a6a 1px; text-underline-offset: 2px; }

/* status bar */
.status { flex: 0 0 40px; display: flex; align-items: stretch; color: #6c707e; font-size: 14.5px; padding-top: 3px; white-space: nowrap; }
.crumbs { display: flex; align-items: center; padding-left: 16px; }
.crs { font-size: 14px; }
.modi { width: 12px; height: 12px; margin-right: 3px; }
.cc { width: 14px; height: 14px; margin: 0 9px; }
.cc2 { margin: 0 8px; }
.htmli { width: 16px; height: 16px; margin-right: 7px; }
.stright { margin-left: auto; display: flex; align-items: center; height: 37px; padding-right: 138px; }
.st-hex { width: 39px; height: 37px; background: #f7f8fa; display: flex; align-items: center; justify-content: center; }
.st-hex svg { width: 20px; height: 20px; }
.st-pos { margin-left: 10px; }
.st-lua { margin-left: 18px; }
.st-y { margin-left: 23px; color: #e8102a; font: italic 900 22px/22px "Liberation Sans", sans-serif; }
.st-crlf { margin-left: 22px; }
.st-utf { margin-left: 20px; }
.st-lock { margin-left: 20px; }

/* build menu */
.popup { position: absolute; left: 402px; top: 51px; width: 349px; height: 214px; background: #fff; border-radius: 9px; box-shadow: 0 1px 6px rgba(0, 0, 0, .25); padding: 8px 0 0 6px; font-size: 14.5px; }
.pi { position: relative; display: flex; align-items: center; width: 338px; height: 29px; margin-bottom: 3px; border-radius: 6px; padding-left: 9px; white-space: nowrap; }
.pi-on { background: #d4e2fb; }
.pi em { position: absolute; right: 18px; top: 0; line-height: 29px; font-style: normal; color: #8d9098; }
.pico { width: 20px; height: 20px; margin-right: 6px; flex: none; }
.pnoic { width: 26px; flex: none; }
.psep { width: 349px; margin: 0 0 3px -6px; height: 1px; background: #ebecf0; }
.psub { position: absolute; right: 9px; top: 6px; width: 16px; height: 16px; }

.arrow { position: absolute; left: 0; top: 0; width: 1920px; height: 1020px; pointer-events: none; }

/* IME */
.ime { position: absolute; left: 1781px; top: 976px; width: 133px; height: 36px; background: #fff; border-radius: 6px; box-shadow: 0 1px 4px rgba(0, 0, 0, .2); display: flex; align-items: center; }
.ime-p { width: 18px; height: 15px; margin-left: 10px; }
.ime-zh { font: 500 14px "Noto Sans CJK SC", sans-serif; margin-left: 16px; }
.ime-dot { margin-left: 18px; font: 700 15px "Noto Sans", sans-serif; width: 18px; }
.ime-mic { width: 14px; height: 18px; margin-left: 12px; }
```
